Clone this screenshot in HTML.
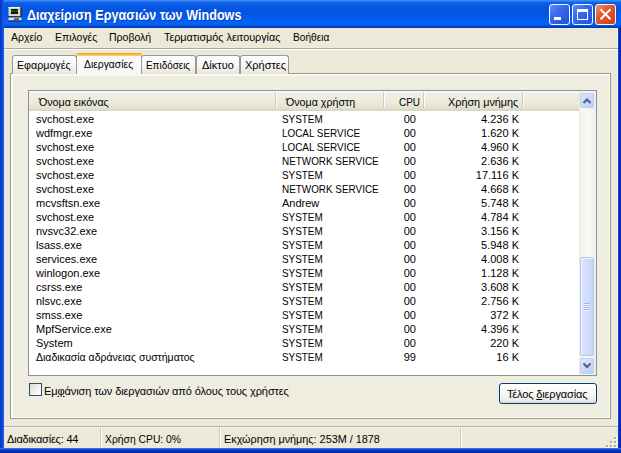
<!DOCTYPE html>
<html><head><meta charset="utf-8">
<style>
*{margin:0;padding:0;box-sizing:border-box}
html,body{width:621px;height:453px;overflow:hidden;background:#0831d9}
body{position:relative;font-family:"Liberation Sans",sans-serif;font-size:11px;color:#000}
.abs{position:absolute}
.sx{display:inline-block;transform-origin:0 0}
#title{position:absolute;left:0;top:0;width:621px;height:28px;
 background:linear-gradient(to bottom,#3d8cf6 0px,#3584f4 1px,#1468ea 2px,#0a5ce6 4px,#0556e2 8px,#0354e2 13px,#035cec 18px,#0462f4 22px,#0460f2 25px,#0346cc 26px,#0238b0 28px);}
#frameL{position:absolute;left:0;top:0;width:4px;height:453px;background:linear-gradient(to right,#0a3cc0 0px,#0a3cc0 1px,#0840d0 1px,#0840d0 2px,#0a4ee0 2px,#0a4ee0 3px,#1a5ce8 3px)}
#frameR{position:absolute;left:618px;top:28px;width:3px;height:425px;background:linear-gradient(to right,#0c48dc,#0034c4 1px,#002ca8 2px)}
#frameB{position:absolute;left:0;top:448px;width:621px;height:5px;background:linear-gradient(to bottom,#5a8cf0 0px,#1e56e0 1px,#0a3cc8 2px,#0030b4 3px,#0028a0 5px)}
#client{position:absolute;left:4px;top:28px;width:614px;height:420px;background:#ece9d8}
#ttext{position:absolute;left:27px;top:7px;font-weight:bold;font-size:14px;color:#fff;text-shadow:1px 1px 0 rgba(10,30,120,0.5);transform:scaleX(0.902);transform-origin:0 0;white-space:nowrap}
.menu{position:absolute;top:31px;font-size:11px}
.tab{position:absolute;top:55px;height:19px;border:1px solid #919b9c;border-bottom:none;border-radius:3px 3px 0 0;
 background:linear-gradient(to bottom,#fefefe,#f7f6f1 50%,#e9e7dc);}
.tab > span{position:absolute;top:3px}
#panel{position:absolute;left:10px;top:73px;width:601px;height:346px;border:1px solid #919b9c;background:#efede0;
 box-shadow:inset 1px 1px 0 #fdfdfb, inset 2px 2px 0 #f6f5ee, inset -1px -1px 0 #fbfbf8}
#list{position:absolute;left:28px;top:90px;width:569px;height:286px;border:1px solid #8a9296;background:#fff;overflow:hidden}
#hdr{position:absolute;left:29px;top:91px;width:550px;height:20px;background:linear-gradient(to bottom,#fdfdfb 0px,#f1f0e8 2px,#ebeadb 12px,#e3e1d0 17px,#d6d3c0 20px)}
.hs{position:absolute;top:92px;width:1px;height:16px;background:#cfccba;box-shadow:1px 0 0 #fbfbf8}
.ht{position:absolute;top:96px}
.r{position:absolute;left:0;height:14px;width:578px}
.r > span{position:absolute;top:1px;white-space:nowrap}
.c1{left:36px}.c2{left:282px}
.c3{left:394px;width:22px;text-align:right}
.c4{left:440px;width:79px;text-align:right}
.cap{display:inline-block;transform:scaleX(0.9);transform-origin:0 0}
#sb{position:absolute;left:579px;top:91px;width:17px;height:284px;background:linear-gradient(to right,#e9e8e0,#f5f4ef 2px,#f7f7f3 10px,#efeee8 17px)}
.sbtn{position:absolute;width:14px;height:15px;border:1px solid #bccff6;border-radius:2px;background:linear-gradient(135deg,#dce7fe,#c9d8fb 60%,#bccdf6)}
#thumb{position:absolute;left:580px;top:257px;width:14px;height:99px;border:1px solid #b4c8f2;border-radius:2px;box-shadow:inset 1px 1px 0 #eef3fe;background:linear-gradient(to right,#e0e9fd,#d3e0fc 30%,#cddbfb 70%,#c4d4f8)}
#chk{position:absolute;left:29px;top:383px;width:13px;height:13px;border:1px solid #2a4e70;background:linear-gradient(135deg,#dcdcd7,#f4f4ef 60%,#fff)}
#btn{position:absolute;left:499px;top:383px;width:98px;height:21px;border:1px solid #003c74;border-radius:3px;background:linear-gradient(to bottom,#fff,#f5f5f2 60%,#ebe9e0 90%,#d8d4c8)}
#btn span{position:absolute;left:7px;top:4px;letter-spacing:-0.15px}
#status{position:absolute;left:4px;top:426px;width:614px;height:22px;border-top:1px solid #b6b3a4;background:#ece9d8;box-shadow:inset 0 1px 0 #f6f5ee}
.ss{position:absolute;top:427px;width:1px;height:21px;background:#d2cfbf;box-shadow:1px 0 0 #fcfcf9}
.st{position:absolute;top:433px}
</style></head><body>
<div id="title"></div>
<svg class="abs" style="left:6px;top:5px" width="18" height="18" viewBox="0 0 18 18">
 <rect x="2.5" y="2" width="12" height="9" fill="#d6d6c6"/>
 <rect x="2.5" y="2" width="12" height="1" fill="#f4f4ec"/>
 <rect x="14.5" y="2" width="1.5" height="9" fill="#303030"/>
 <rect x="5" y="4" width="7" height="5" fill="#081808"/>
 <polyline points="5,6.5 7,5.5 8.5,7 10,5.5 12,6.5" fill="none" stroke="#38a838" stroke-width="0.8"/>
 <rect x="2" y="11.5" width="14" height="1" fill="#202020"/>
 <rect x="2.5" y="12.5" width="13" height="3" fill="#e6e2cc"/>
 <rect x="8" y="13.5" width="5" height="1.2" fill="#181818"/>
 <rect x="2.5" y="15.5" width="14" height="1" fill="#202020"/>
</svg>
<div id="ttext">Διαχείριση Εργασιών των Windows</div>
<div id="frameL"></div><div id="frameR"></div><div id="frameB"></div>
<div id="client"></div>
<div class="abs" style="left:4px;top:28px;width:1px;height:420px;background:#e4eefa"></div>
<div class="abs" style="left:617px;top:28px;width:1px;height:420px;background:#f6f8fc"></div>

<div class="menu" style="left:11px"><span class="sx" style="transform:scaleX(0.95)">Αρχείο</span></div>
<div class="menu" style="left:54.5px"><span class="sx" style="transform:scaleX(0.95)">Επιλογές</span></div>
<div class="menu" style="left:108.5px"><span class="sx" style="transform:scaleX(0.955)">Προβολή</span></div>
<div class="menu" style="left:164px"><span class="sx" style="transform:scaleX(0.98)">Τερματισμός λειτουργίας</span></div>
<div class="menu" style="left:293px"><span class="sx" style="transform:scaleX(0.92)">Βοήθεια</span></div>
<div class="abs" style="left:4px;top:48px;width:614px;height:1px;background:#aca899;box-shadow:0 1px 0 #fff"></div>

<div id="panel"></div>
<div class="tab" style="left:12px;width:65px"><span style="left:4px"><span class="sx" style="transform:scaleX(0.97)">Εφαρμογές</span></span></div>
<div class="tab" style="left:141px;width:55px"><span style="left:4px"><span class="sx" style="transform:scaleX(0.9)">Επιδόσεις</span></span></div>
<div class="tab" style="left:196px;width:44px"><span style="left:5px">Δίκτυο</span></div>
<div class="tab" style="left:240px;width:49px"><span style="left:4px">Χρήστες</span></div>
<div class="abs" style="left:76px;top:53px;width:66px;height:21px;background:linear-gradient(to bottom,#fcfcfe,#f8f7f3);border-left:1px solid #919b9c;border-right:1px solid #919b9c;border-radius:3px 3px 0 0">
 <div class="abs" style="left:-1px;top:0;width:66px;height:3px;background:linear-gradient(to bottom,#e39b34,#fcc444 60%,#ffd36a);border-radius:3px 3px 0 0"></div>
 <span class="abs" style="left:7px;top:5px"><span class="sx" style="transform:scaleX(0.94)">Διεργασίες</span></span>
</div>

<div id="list"></div>
<div id="hdr"></div>
<div class="ht" style="left:39px"><span class="sx" style="transform:scaleX(0.97)">Όνομα εικόνας</span></div>
<div class="hs" style="left:275px"></div>
<div class="ht" style="left:286px"><span class="sx" style="transform:scaleX(0.97)">Όνομα χρήστη</span></div>
<div class="hs" style="left:383px"></div>
<div class="ht" style="left:399px"><span class="sx" style="transform:scaleX(0.9)">CPU</span></div>
<div class="hs" style="left:423px"></div>
<div class="ht" style="left:447.5px"><span class="sx" style="transform:scaleX(0.985)">Χρήση μνήμης</span></div>
<div class="hs" style="left:522px"></div>

<div class="r" style="top:112px"><span class="c1">svchost.exe</span><span class="c2"><span class="cap">SYSTEM</span></span><span class="c3">00</span><span class="c4">4.236 K</span></div>
<div class="r" style="top:126px"><span class="c1">wdfmgr.exe</span><span class="c2"><span class="cap">LOCAL SERVICE</span></span><span class="c3">00</span><span class="c4">1.620 K</span></div>
<div class="r" style="top:140px"><span class="c1">svchost.exe</span><span class="c2"><span class="cap">LOCAL SERVICE</span></span><span class="c3">00</span><span class="c4">4.960 K</span></div>
<div class="r" style="top:154px"><span class="c1">svchost.exe</span><span class="c2"><span class="cap">NETWORK SERVICE</span></span><span class="c3">00</span><span class="c4">2.636 K</span></div>
<div class="r" style="top:168px"><span class="c1">svchost.exe</span><span class="c2"><span class="cap">SYSTEM</span></span><span class="c3">00</span><span class="c4">17.116 K</span></div>
<div class="r" style="top:182px"><span class="c1">svchost.exe</span><span class="c2"><span class="cap">NETWORK SERVICE</span></span><span class="c3">00</span><span class="c4">4.668 K</span></div>
<div class="r" style="top:196px"><span class="c1">mcvsftsn.exe</span><span class="c2">Andrew</span><span class="c3">00</span><span class="c4">5.748 K</span></div>
<div class="r" style="top:210px"><span class="c1">svchost.exe</span><span class="c2"><span class="cap">SYSTEM</span></span><span class="c3">00</span><span class="c4">4.784 K</span></div>
<div class="r" style="top:224px"><span class="c1">nvsvc32.exe</span><span class="c2"><span class="cap">SYSTEM</span></span><span class="c3">00</span><span class="c4">3.156 K</span></div>
<div class="r" style="top:238px"><span class="c1">lsass.exe</span><span class="c2"><span class="cap">SYSTEM</span></span><span class="c3">00</span><span class="c4">5.948 K</span></div>
<div class="r" style="top:252px"><span class="c1">services.exe</span><span class="c2"><span class="cap">SYSTEM</span></span><span class="c3">00</span><span class="c4">4.008 K</span></div>
<div class="r" style="top:266px"><span class="c1">winlogon.exe</span><span class="c2"><span class="cap">SYSTEM</span></span><span class="c3">00</span><span class="c4">1.128 K</span></div>
<div class="r" style="top:280px"><span class="c1">csrss.exe</span><span class="c2"><span class="cap">SYSTEM</span></span><span class="c3">00</span><span class="c4">3.608 K</span></div>
<div class="r" style="top:294px"><span class="c1">nlsvc.exe</span><span class="c2"><span class="cap">SYSTEM</span></span><span class="c3">00</span><span class="c4">2.756 K</span></div>
<div class="r" style="top:308px"><span class="c1">smss.exe</span><span class="c2"><span class="cap">SYSTEM</span></span><span class="c3">00</span><span class="c4">372 K</span></div>
<div class="r" style="top:322px"><span class="c1">MpfService.exe</span><span class="c2"><span class="cap">SYSTEM</span></span><span class="c3">00</span><span class="c4">4.396 K</span></div>
<div class="r" style="top:336px"><span class="c1">System</span><span class="c2"><span class="cap">SYSTEM</span></span><span class="c3">00</span><span class="c4">220 K</span></div>
<div class="r" style="top:350px"><span class="c1"><span class="sx" style="transform:scaleX(0.955)">Διαδικασία αδράνειας συστήματος</span></span><span class="c2"><span class="cap">SYSTEM</span></span><span class="c3">99</span><span class="c4">16 K</span></div>

<div id="sb"></div>
<div class="sbtn" style="left:580px;top:93px"></div>
<svg class="abs" style="left:579px;top:93px" width="17" height="17"><polyline points="4.5,10 8,6.5 11.5,10" fill="none" stroke="#4d6185" stroke-width="2"/></svg>
<div id="thumb"></div>
<div class="abs" style="left:584px;top:303px;width:6px;height:1px;background:#9cb4e4;box-shadow:0 2px 0 #9cb4e4,0 4px 0 #9cb4e4,0 6px 0 #9cb4e4,0 1px 0 #f4f8fe,0 3px 0 #f4f8fe,0 5px 0 #f4f8fe,0 7px 0 #f4f8fe"></div>
<div class="sbtn" style="left:580px;top:358px;height:16px"></div>
<svg class="abs" style="left:579px;top:357px" width="17" height="17"><polyline points="4.5,6.5 8,10 11.5,6.5" fill="none" stroke="#4d6185" stroke-width="2"/></svg>

<div id="chk"></div>
<div class="abs" style="left:44px;top:385px;letter-spacing:-0.1px">Εμ<u>φ</u>άνιση των διεργασιών από όλους τους χρήστες</div>
<div id="btn"><span>Τέλος <u>δ</u>ιεργασίας</span></div>

<div id="status"></div>
<div class="ss" style="left:100px"></div>
<div class="ss" style="left:219px"></div>
<div class="ss" style="left:460px"></div>
<div class="st" style="left:7px;letter-spacing:-0.2px">Διαδικασίες: 44</div>
<div class="st" style="left:105px"><span class="sx" style="transform:scaleX(0.94)">Χρήση CPU: 0%</span></div>
<div class="st" style="left:224px"><span class="sx" style="transform:scaleX(0.985)">Εκχώρηση μνήμης: 253M / 1878</span></div>
<svg class="abs" style="left:600px;top:433px" width="18" height="16">
 <g fill="#fff"><rect x="15" y="5" width="2" height="2"/><rect x="11" y="9" width="2" height="2"/><rect x="15" y="9" width="2" height="2"/><rect x="7" y="13" width="2" height="2"/><rect x="11" y="13" width="2" height="2"/><rect x="15" y="13" width="2" height="2"/></g>
 <g fill="#b4b0a0"><rect x="14" y="4" width="2" height="2"/><rect x="10" y="8" width="2" height="2"/><rect x="14" y="8" width="2" height="2"/><rect x="6" y="12" width="2" height="2"/><rect x="10" y="12" width="2" height="2"/><rect x="14" y="12" width="2" height="2"/></g>
</svg>

<!-- title buttons -->
<div class="abs" style="left:549px;top:4px;width:21px;height:21px;border:1px solid #f4faff;border-radius:3px;background:linear-gradient(135deg,#6090f8,#3a6cee 35%,#2c5ce4 70%,#2452d8)">
 <div class="abs" style="left:4px;top:12px;width:7px;height:3px;background:#fff"></div></div>
<div class="abs" style="left:572px;top:4px;width:21px;height:21px;border:1px solid #f4faff;border-radius:3px;background:linear-gradient(135deg,#6090f8,#3a6cee 35%,#2c5ce4 70%,#2452d8)">
 <div class="abs" style="left:4px;top:4px;width:11px;height:11px;border:1px solid #fff;border-top:3px solid #fff"></div></div>
<div class="abs" style="left:595px;top:4px;width:21px;height:21px;border:1px solid #f4faff;border-radius:3px;background:linear-gradient(135deg,#f0946a,#e4582c 40%,#d84a20 75%,#c83c18)">
 <svg class="abs" style="left:0;top:0" width="19" height="19"><path d="M4.5 4.3 L14.5 14.3 M14.5 4.3 L4.5 14.3" stroke="#fff" stroke-width="2"/></svg></div>
</body></html>
